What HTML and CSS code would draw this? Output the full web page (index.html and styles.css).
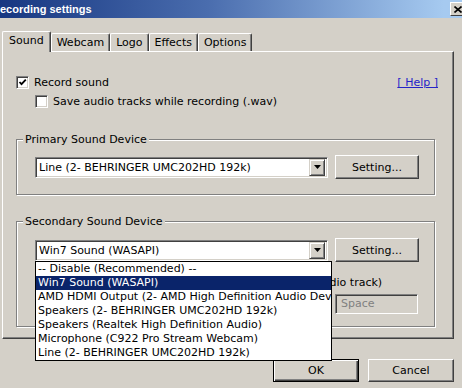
FILE: index.html
```html
<!DOCTYPE html>
<html lang="en">
<head>
    <meta charset="UTF-8">
    <title>Recording settings</title>
    <link rel="stylesheet" href="styles.css">
</head>
<body>
    <div class="window">
        <div class="titlebar">
            <span class="title">ecording settings</span>
            <span class="close-btn">
                <svg width="8" height="7" viewBox="0 0 8 7"><path d="M0.5 0.5 L7.5 6.5 M7.5 0.5 L0.5 6.5" stroke="#000" stroke-width="1.6"/></svg>
            </span>
        </div>

        <div class="tabs">
            <div class="tab active">Sound</div>
            <div class="tab">Webcam</div>
            <div class="tab">Logo</div>
            <div class="tab">Effects</div>
            <div class="tab">Options</div>
        </div>

        <div class="panel">
            <div class="row-top">
                <label class="check">
                    <span class="box"><svg width="9" height="9" viewBox="0 0 9 9"><path d="M1.5 4 L3.5 6.2 L7.8 1.6" fill="none" stroke="#000" stroke-width="1.8"/></svg></span>
                    Record sound
                </label>
                <a class="help" href="#">[ Help ]</a>
            </div>
            <label class="check sub"><span class="box"></span>Save audio tracks while recording (.wav)</label>

            <fieldset class="group">
                <legend>Primary Sound Device</legend>
                <div class="device-row">
                    <div class="combo">
                        <span class="combo-text">Line (2- BEHRINGER UMC202HD 192k)</span>
                        <span class="combo-arrow"><svg width="7" height="4" viewBox="0 0 7 4"><path d="M0 0 H7 L3.5 4 Z" fill="#000"/></svg></span>
                    </div>
                    <button class="btn">Setting...</button>
                </div>
            </fieldset>

            <fieldset class="group second">
                <legend>Secondary Sound Device</legend>
                <div class="device-row">
                    <div class="combo-wrap">
                        <div class="combo">
                            <span class="combo-text">Win7 Sound (WASAPI)</span>
                            <span class="combo-arrow"><svg width="7" height="4" viewBox="0 0 7 4"><path d="M0 0 H7 L3.5 4 Z" fill="#000"/></svg></span>
                        </div>
                        <ul class="drop-list">
                            <li>-- Disable (Recommended) --</li>
                            <li class="selected">Win7 Sound (WASAPI)</li>
                            <li>AMD HDMI Output (2- AMD High Definition Audio Device)</li>
                            <li>Speakers (2- BEHRINGER UMC202HD 192k)</li>
                            <li>Speakers (Realtek High Definition Audio)</li>
                            <li>Microphone (C922 Pro Stream Webcam)</li>
                            <li>Line (2- BEHRINGER UMC202HD 192k)</li>
                        </ul>
                    </div>
                    <button class="btn">Setting...</button>
                </div>
                <label class="check track"><span class="box"></span>Records to a separate file (not mixed into main audio track)</label>
                <div class="device-row hotkey-row">
                    <div></div>
                    <div class="textbox">Space</div>
                </div>
            </fieldset>
        </div>

        <div class="footer">
            <button class="btn default">OK</button>
            <button class="btn">Cancel</button>
        </div>
    </div>
</body>
</html>
```

FILE: styles.css
```css
body {
    margin: 0;
    background: #d4d0c8;
    font-family: "DejaVu Sans", sans-serif;
    font-size: 11px;
    color: #000;
}
.window {
    width: 462px;
    height: 388px;
    overflow: hidden;
    background: #d4d0c8;
    display: flex;
    flex-direction: column;
}
.titlebar {
    height: 18px;
    flex-shrink: 0;
    display: flex;
    align-items: center;
    justify-content: space-between;
    background: linear-gradient(to right, #173781 0%, #4a6dae 45%, #a6caf0 96%);
}
.title {
    color: #fff;
    font-family: "Liberation Sans", sans-serif;
    font-weight: bold;
    font-size: 11px;
}
.close-btn {
    width: 16px;
    height: 14px;
    margin-right: -4px;
    box-sizing: border-box;
    background: #d4d0c8;
    border: 1px solid;
    border-color: #fff #404040 #404040 #fff;
    display: flex;
    align-items: center;
    justify-content: center;
}

/* tab strip */
.tabs {
    height: 20px;
    margin-top: 13px;
    padding-left: 4px;
    display: flex;
    align-items: flex-end;
    position: relative;
    z-index: 1;
}
.tab {
    height: 18px;
    padding: 0 5px;
    box-sizing: border-box;
    border: 1px solid;
    border-bottom: none;
    border-color: #fff #404040 #fff #fff;
    border-radius: 2px 2px 0 0;
    box-shadow: inset -1px 0 #808080;
    display: flex;
    align-items: center;
}
.tab.active {
    height: 21px;
    margin: 0 -1px -1px -2px;
    padding: 2px 6px 0;
    background: #d4d0c8;
    align-items: flex-start;
}
.tab.active + .tab {
    margin-left: 1px;
}

/* main page */
.panel {
    height: 288px;
    flex-shrink: 0;
    margin: 0 8px 0 2px;
    padding: 24px 15px 0 13px;
    box-sizing: border-box;
    border: 1px solid;
    border-color: #fff #404040 #404040 #fff;
    box-shadow: inset -1px -1px #808080;
}
.row-top {
    height: 13px;
    display: flex;
    justify-content: space-between;
    align-items: center;
}
.check {
    height: 13px;
    display: flex;
    align-items: center;
    gap: 5px;
    white-space: nowrap;
}
.check.sub {
    margin: 6px 0 0 19px;
}
.box {
    width: 13px;
    height: 13px;
    box-sizing: border-box;
    flex-shrink: 0;
    background: #fff;
    border: 1px solid;
    border-color: #808080 #fff #fff #808080;
    box-shadow: inset 1px 1px #404040, inset -1px -1px #d4d0c8;
    display: flex;
    align-items: center;
    justify-content: center;
}
.help {
    color: #2424c8;
    text-decoration: underline;
}

/* group boxes */
.group {
    width: 419px;
    box-sizing: border-box;
    margin: 25px 0 0 0;
    padding: 0 15px 15px 18px;
    min-width: 0;
    border: 1px solid #808080;
    box-shadow: 1px 1px 0 #fff, inset 1px 1px 0 #fff;
}
.group legend {
    margin-left: -12px;
    padding: 0 2px;
    background: #d4d0c8;
    line-height: 13px;
}
.group.second {
    margin-top: 20px;
    padding-bottom: 12px;
}
.device-row {
    display: grid;
    grid-template-columns: 293px 84px;
    gap: 7px;
    align-items: center;
    margin-top: 9px;
}
.second .device-row {
    margin-top: 10px;
}
.second .hotkey-row {
    margin-top: 5px;
}
.check.track {
    margin-top: 14px;
}
.combo-wrap {
    position: relative;
}
.combo {
    height: 21px;
    box-sizing: border-box;
    background: #fff;
    border: 1px solid;
    border-color: #808080 #fff #fff #808080;
    box-shadow: inset 1px 1px #404040, inset -1px -1px #d4d0c8;
    display: flex;
    align-items: center;
    justify-content: space-between;
    padding: 2px;
}
.combo-text {
    padding-left: 1px;
    white-space: nowrap;
}
.combo-arrow {
    width: 16px;
    height: 17px;
    box-sizing: border-box;
    background: #d4d0c8;
    border: 1px solid;
    border-color: #d4d0c8 #404040 #404040 #d4d0c8;
    box-shadow: inset 1px 1px #fff, inset -1px -1px #808080;
    display: flex;
    align-items: center;
    justify-content: center;
}
.drop-list {
    position: absolute;
    top: 21px;
    left: 0;
    width: 295px;
    margin: 0;
    padding: 0;
    list-style: none;
    background: #fff;
    border: 1px solid #000;
    z-index: 5;
}
.drop-list li {
    height: 14px;
    line-height: 14px;
    padding-left: 2px;
    white-space: nowrap;
    overflow: hidden;
}
.drop-list li.selected {
    background: #0a246a;
    color: #fff;
}
.textbox {
    width: 83px;
    height: 20px;
    box-sizing: border-box;
    border: 1px solid;
    border-color: #808080 #fff #fff #808080;
    box-shadow: inset 1px 1px #404040, inset -1px -1px #d4d0c8;
    color: #808080;
    padding-left: 5px;
    line-height: 18px;
}

/* buttons */
.btn {
    height: 24px;
    box-sizing: border-box;
    font-family: "DejaVu Sans", sans-serif;
    font-size: 11px;
    color: #000;
    background: #d4d0c8;
    border: 1px solid;
    border-color: #fff #404040 #404040 #fff;
    box-shadow: inset -1px -1px #808080;
    padding: 0;
}
.footer {
    margin-top: 20px;
    padding-right: 8px;
    display: flex;
    justify-content: flex-end;
    gap: 9px;
}
.footer .btn {
    width: 86px;
    height: 23px;
}
.btn.default {
    border: 1px solid #000;
    box-shadow: inset 1px 1px #fff, inset -1px -1px #404040, inset -2px -2px #808080;
}
```
